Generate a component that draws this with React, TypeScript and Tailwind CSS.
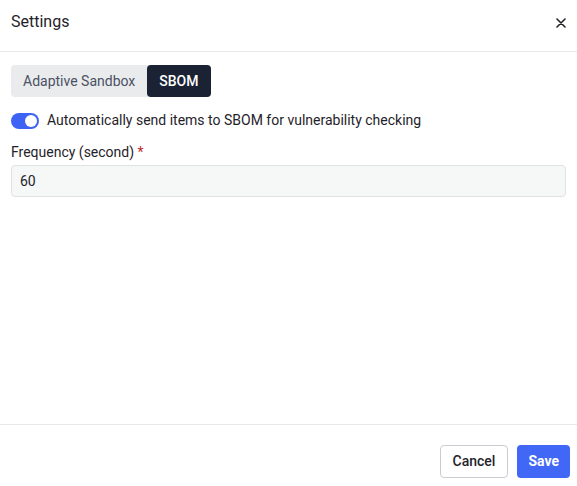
export default function App() {
  return (
    <div
      className="w-[577px] h-[486px] bg-white flex flex-col text-[#1f2329]"
      style={{ fontFamily: "Roboto, 'Noto Sans', sans-serif" }}
    >
      {/* header */}
      <div className="h-[52px] shrink-0 flex items-center justify-between pl-[11px] pr-[9px] border-b border-[#e8e9eb]">
        <span className="text-[16px] text-[#1f2329] -mt-[7px]">Settings</span>
        <button className="w-[14px] h-[14px] flex items-center justify-center -mt-[5px]">
          <svg width="10" height="10" viewBox="0 0 10 10">
            <path d="M1 1L9 9M9 1L1 9" stroke="#1f2329" strokeWidth="1.6" strokeLinecap="round" />
          </svg>
        </button>
      </div>

      {/* body */}
      <div className="flex-1 px-[11px] pt-[13px] flex flex-col">
        <div className="flex w-fit rounded-[4px] bg-[#eaebed] h-[32px]">
          <button className="px-[12px] text-[14px] text-[#4a5163]">Adaptive Sandbox</button>
          <button className="px-[12px] text-[14px] font-medium text-white bg-[#1a2234] rounded-[4px]">SBOM</button>
        </div>

        <div className="flex items-center mt-[13px] gap-[8px]">
          <div className="w-[28px] h-[16px] rounded-full bg-[#3d63f4] relative">
            <div className="absolute right-[2px] top-[2px] w-[12px] h-[12px] rounded-full bg-white" />
          </div>
          <span className="text-[14px] text-[#1f2329]">Automatically send items to SBOM for vulnerability checking</span>
        </div>

        <div className="mt-[11px] text-[14px] text-[#1f2329] leading-[20px]">
          Frequency (second) <span className="text-[#c0272d]">*</span>
        </div>
        <div className="mt-[3px] h-[32px] rounded-[4px] border border-[#dfe1e4] bg-[#f6f7f7] flex items-center px-[8px] text-[14px]">
          60
        </div>
      </div>

      {/* footer */}
      <div className="h-[62px] shrink-0 border-t border-[#e8e9eb] flex items-start justify-end gap-[9px] pt-[20px] pr-[7px]">
        <button className="h-[33px] px-[12px] rounded-[4px] border border-[#c9ccd1] bg-white text-[14px] font-medium text-[#1f2329]">
          Cancel
        </button>
        <button className="h-[33px] px-[11px] rounded-[4px] bg-[#4167f6] text-[14px] font-bold text-white">
          Save
        </button>
      </div>
    </div>
  );
}
